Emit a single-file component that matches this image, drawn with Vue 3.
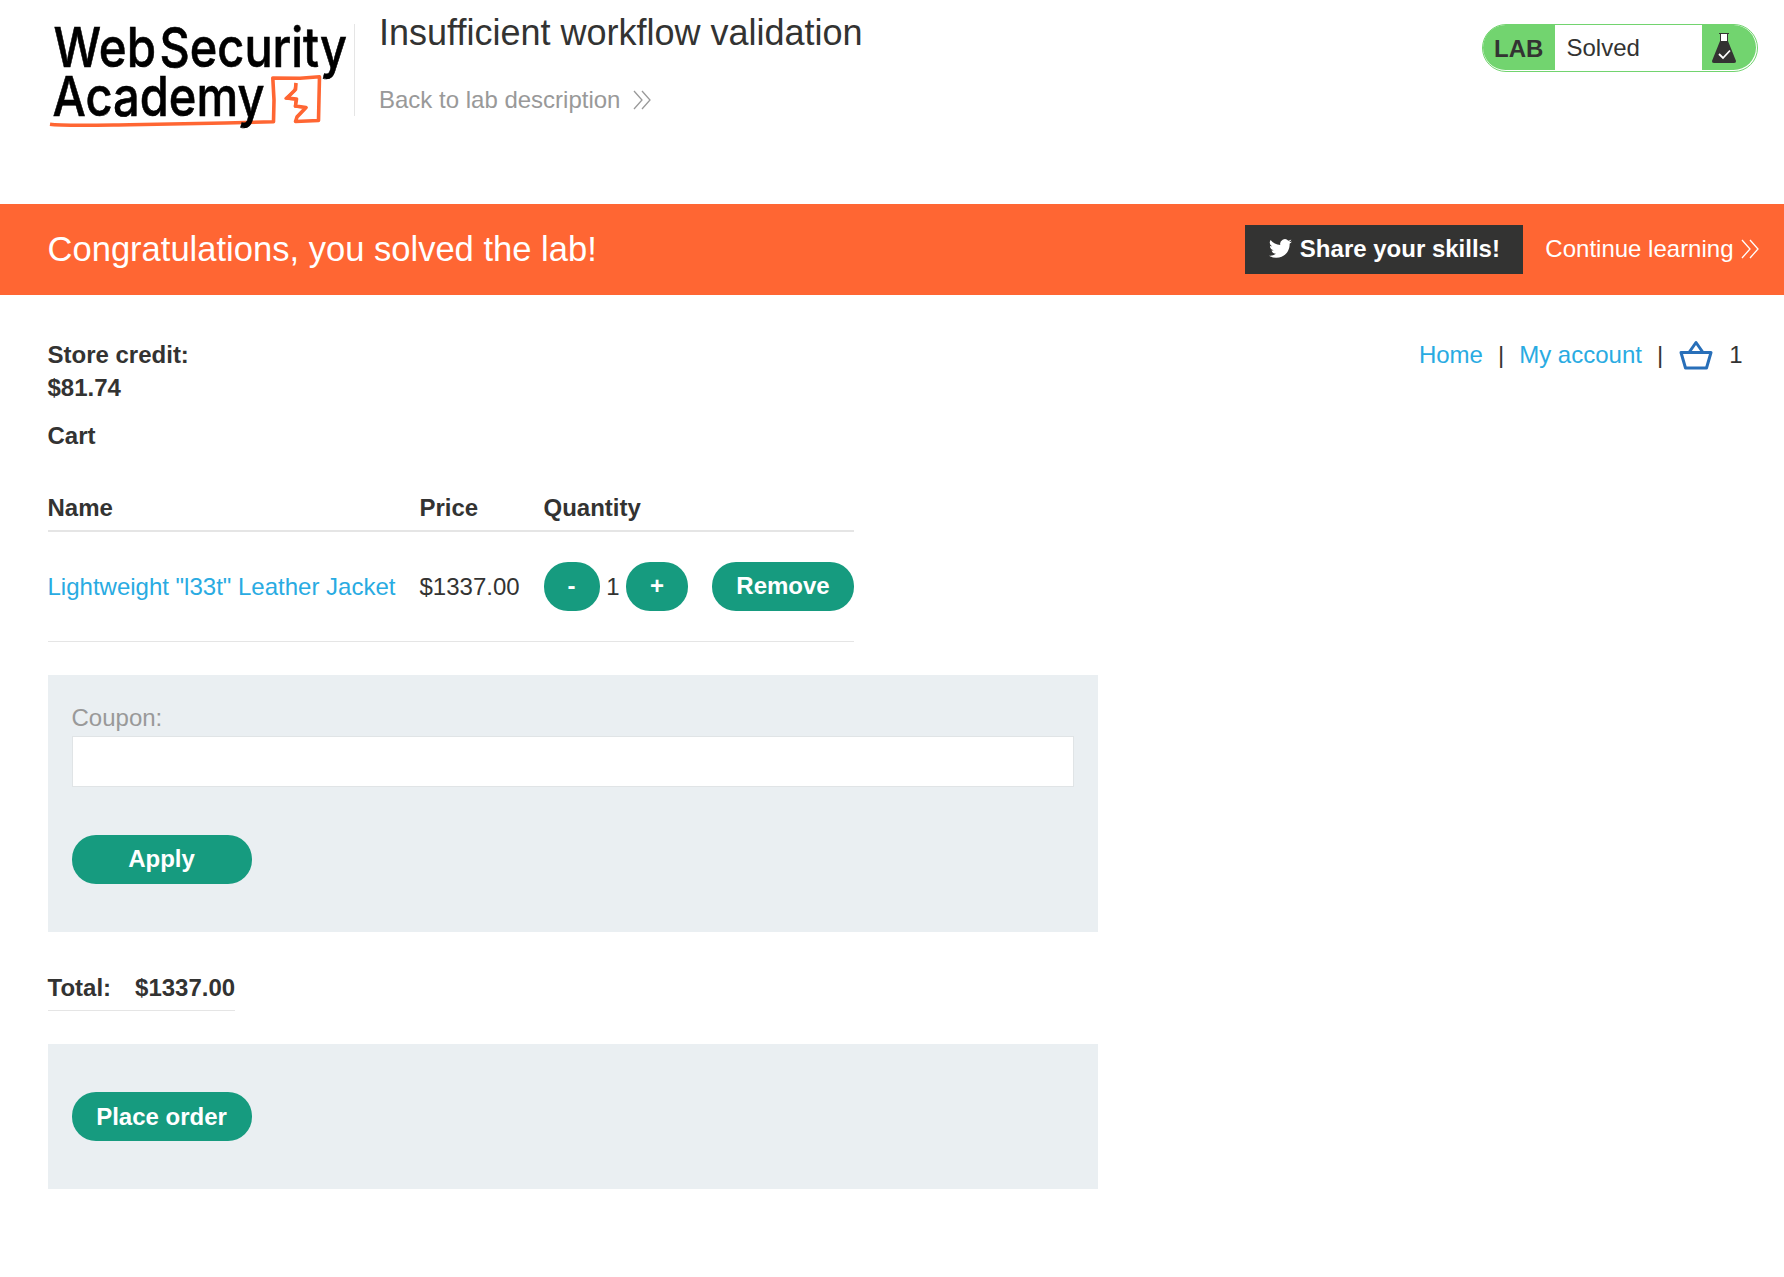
<script setup>
const item = { name: 'Lightweight "l33t" Leather Jacket', price: '$1337.00', quantity: 1 }
</script>

<template>
  <div class="page">
    <header class="top">
      <svg class="logo" width="307" height="110" viewBox="47 20 307 110">
        <path class="sketch" d="M50 124.300 C62 126 90 125.300 130 124.800 L225 123 L273.500 121.800 L274 100 L272.800 78 L300 78.300 L319.500 76.800 L319 98 L318.500 120.500 L295.500 121.500 L297 117 L306 107.500 L295.500 106 L296.500 99 L287 98 L295.500 89.500 L296 83" />
        <path class="spark" d="M296 83 L294.500 91 L285.500 98.500 L296 99.500 L295 106.500 L306 107.500 L296.500 117" />
        <g class="wordmark">
          <text x="53.500" y="67.300" textLength="102.500" lengthAdjust="spacingAndGlyphs">Web</text>
          <text x="159.500" y="67.300" textLength="187.500" lengthAdjust="spacingAndGlyphs">Security</text>
          <text x="52.500" y="116" textLength="212" lengthAdjust="spacingAndGlyphs">Academy</text>
        </g>
      </svg>
      <div class="heading">
        <h2>Insufficient workflow validation</h2>
        <a class="back">Back to lab description
          <svg width="18" height="20" viewBox="0 0 18 20"><path d="M1 1l8 9-8 9M9 1l8 9-8 9" /></svg>
        </a>
      </div>
      <div class="badge">
        <span class="lab">LAB</span>
        <p>Solved</p>
        <span class="flask">
          <svg width="26" height="32" viewBox="0 0 26 32">
            <path d="M9.500 2h7v7h-7z" fill="#fff" />
            <path d="M8 1.500h10M9.500 2v8M16.500 2v8" stroke="#333332" fill="none" />
            <path d="M9 9h8l7.800 19.500q.6 2.500-1.800 2.500H3q-2.400 0-1.800-2.500z" fill="#333332" />
            <path d="M8 22l4 4 7-7.500" stroke="#fff" stroke-width="1.800" fill="none" />
          </svg>
        </span>
      </div>
    </header>

    <section class="banner">
      <h4>Congratulations, you solved the lab!</h4>
      <a class="share">
        <svg width="23" height="23" viewBox="0 0 24 24"><path fill="#fff" d="M23.950 4.570a10 10 0 0 1-2.820.770 4.960 4.960 0 0 0 2.160-2.720c-.950.550-2 .950-3.130 1.180a4.920 4.920 0 0 0-8.380 4.480C7.690 8.100 4.070 6.130 1.640 3.160a4.920 4.920 0 0 0 1.520 6.570 4.900 4.900 0 0 1-2.230-.610v.060a4.920 4.920 0 0 0 3.950 4.830 5 5 0 0 1-2.210.080 4.940 4.940 0 0 0 4.600 3.420A9.870 9.870 0 0 1 0 19.540a14 14 0 0 0 7.550 2.210c9.050 0 14-7.500 14-13.980 0-.210 0-.420-.020-.630a9.940 9.940 0 0 0 2.460-2.550z" /></svg>
        Share your skills!
      </a>
      <a class="continue">Continue learning
        <svg width="18" height="20" viewBox="0 0 18 20"><path d="M1 1l8 9-8 9M9 1l8 9-8 9" /></svg>
      </a>
    </section>

    <main>
      <div class="account">
        <p class="credit">Store credit:<br />$81.74</p>
        <nav>
          <a>Home</a><i>|</i><a>My account</a><i>|</i>
          <svg width="34" height="32" viewBox="0 0 34 32"><path d="M2 13.500h30l-4.500 15.500h-21zM10 13.500l7-10 7 10" /></svg>
          <span>1</span>
        </nav>
      </div>
      <h1>Cart</h1>
      <table class="cart">
        <thead>
          <tr><th>Name</th><th>Price</th><th>Quantity</th><th></th></tr>
        </thead>
        <tbody>
          <tr>
            <td><a>{{ item.name }}</a></td>
            <td>{{ item.price }}</td>
            <td>
              <div class="stepper"><button class="minus">-</button><span>{{ item.quantity }}</span><button class="plus">+</button></div>
            </td>
            <td><button class="remove">Remove</button></td>
          </tr>
        </tbody>
      </table>

      <form class="panel coupon" @submit.prevent>
        <label for="coupon">Coupon:</label>
        <input id="coupon" type="text" />
        <button class="wide">Apply</button>
      </form>

      <div class="total"><span>Total:</span><span>{{ item.price }}</span></div>

      <form class="panel order" @submit.prevent>
        <button class="wide">Place order</button>
      </form>
    </main>
  </div>
</template>

<style>
body {
  margin: 0;
  background: #fff;
}
</style>

<style scoped>
.page {
  width: 1784px;
  height: 1277px;
  overflow: hidden;
  font: 24px/33px "Liberation Sans", Arial, sans-serif;
  color: #333332;
}
h1, h2, h4, p { margin: 0; }
a { color: #29abe2; }
.top {
  display: flex;
  align-items: flex-start;
  height: 204px;
  padding-left: 47px;
  box-sizing: border-box;
}
.logo { margin-top: 20px; flex: none; overflow: visible; }
.wordmark {
  font: 500 55.500px Inter, Roboto, sans-serif;
  fill: #000;
  stroke: #000;
  stroke-width: 0.600;
}
.sketch, .spark {
  fill: none;
  stroke: #ff6633;
  stroke-width: 3.600;
  stroke-linejoin: round;
}
.spark { stroke-width: 2.500; }
.heading {
  width: 700px;
  height: 92px;
  margin-top: 24px;
  padding-left: 24px;
  border-left: 1px solid #e5e5e5;
  box-sizing: border-box;
}
h2 {
  margin-top: -11px;
  font-size: 36px;
  font-weight: 400;
  line-height: 40px;
  white-space: nowrap;
}
.back {
  display: flex;
  align-items: center;
  gap: 13px;
  margin-top: 30px;
  color: #999;
}
.back svg, .continue svg {
  fill: none;
  stroke: currentColor;
  stroke-width: 1.300;
}
.badge {
  display: flex;
  width: 276px;
  height: 48px;
  margin: 24px 26px 0 auto;
  padding-bottom: 1px;
  box-sizing: border-box;
  border: 1px solid #72d46f;
  border-radius: 24px;
  line-height: 46px;
}
.lab {
  width: 72px;
  padding-left: 11px;
  box-sizing: border-box;
  border-radius: 23px 0 0 23px;
  background: #72d46f;
  font-weight: 700;
  line-height: 48px;
}
.badge p { width: 147px; padding-left: 11.500px; box-sizing: border-box; }
.flask {
  display: flex;
  width: 54px;
  padding: 7px 0 0 9px;
  box-sizing: border-box;
  border-radius: 0 23px 23px 0;
  background: #72d46f;
}
.banner {
  display: flex;
  align-items: center;
  height: 91px;
  padding: 0 25.500px 0 47.500px;
  box-sizing: border-box;
  background: #ff6633;
  color: #fff;
}
h4 {
  margin-right: auto;
  font-size: 34.560px;
  font-weight: 400;
}
.share {
  display: flex;
  align-items: center;
  gap: 7.500px;
  width: 278px;
  height: 49px;
  padding: 0 0 2px 24px;
  box-sizing: border-box;
  background: #333332;
  color: #fff;
  font-weight: 700;
}
.continue {
  display: flex;
  align-items: center;
  gap: 7px;
  margin-left: 22px;
  padding-bottom: 2px;
  color: #fff;
}
main { padding: 43px 41.500px 0 47.500px; }
.account { display: flex; justify-content: space-between; align-items: flex-start; }
.credit { font-weight: 700; }
nav { display: flex; align-items: center; }
nav i { margin: 0 15px; font-style: normal; }
nav svg {
  margin-left: 0.500px;
  fill: none;
  stroke: #286fb9;
  stroke-width: 3;
  stroke-linejoin: round;
}
nav span { margin-left: 16.500px; }
h1 { margin-top: 15px; font-size: 24px; line-height: 33px; }
.cart { width: 806px; margin-top: 31px; border-collapse: collapse; table-layout: fixed; }
.cart th, .cart td { padding: 0; text-align: left; white-space: nowrap; }
.cart th { height: 48px; padding-top: 1px; box-sizing: border-box; border-bottom: 2px solid #e5e5e5; }
.cart th:nth-child(1) { width: 372px; }
.cart th:nth-child(2) { width: 124px; }
.cart th:nth-child(3) { width: 168px; }
.cart td { height: 109px; border-bottom: 1px solid #e5e5e5; }
button {
  display: block;
  height: 49px;
  padding: 0 0 1px;
  border: 0;
  border-radius: 24px;
  background: #169b7f;
  color: #fff;
  font: 700 24px "Liberation Sans", Arial, sans-serif;
}
.stepper { display: flex; align-items: center; }
.stepper span { width: 26.500px; padding-left: 0.500px; box-sizing: border-box; text-align: center; }
.minus { width: 56px; }
.plus { width: 62px; }
.remove { width: 142px; padding-left: 1px; }
.panel {
  display: flex;
  flex-direction: column;
  width: 1050px;
  padding: 0 24px;
  box-sizing: border-box;
  background: #eaeff2;
}
.coupon { height: 257px; margin-top: 33px; padding-top: 26px; }
.coupon label { color: #999; height: 35px; }
.coupon input {
  height: 51px;
  box-sizing: border-box;
  border: 1px solid #e0e4e6;
  background: #fff;
}
.wide { width: 180px; margin-top: 48px; }
.total {
  display: inline-flex;
  gap: 24px;
  height: 47px;
  margin-top: 32px;
  padding-top: 7px;
  box-sizing: border-box;
  border-bottom: 1px solid #e5e5e5;
  font-weight: 700;
}
.order { height: 145px; margin-top: 33px; }
.order .wide { padding: 1px 0 0; }
</style>
